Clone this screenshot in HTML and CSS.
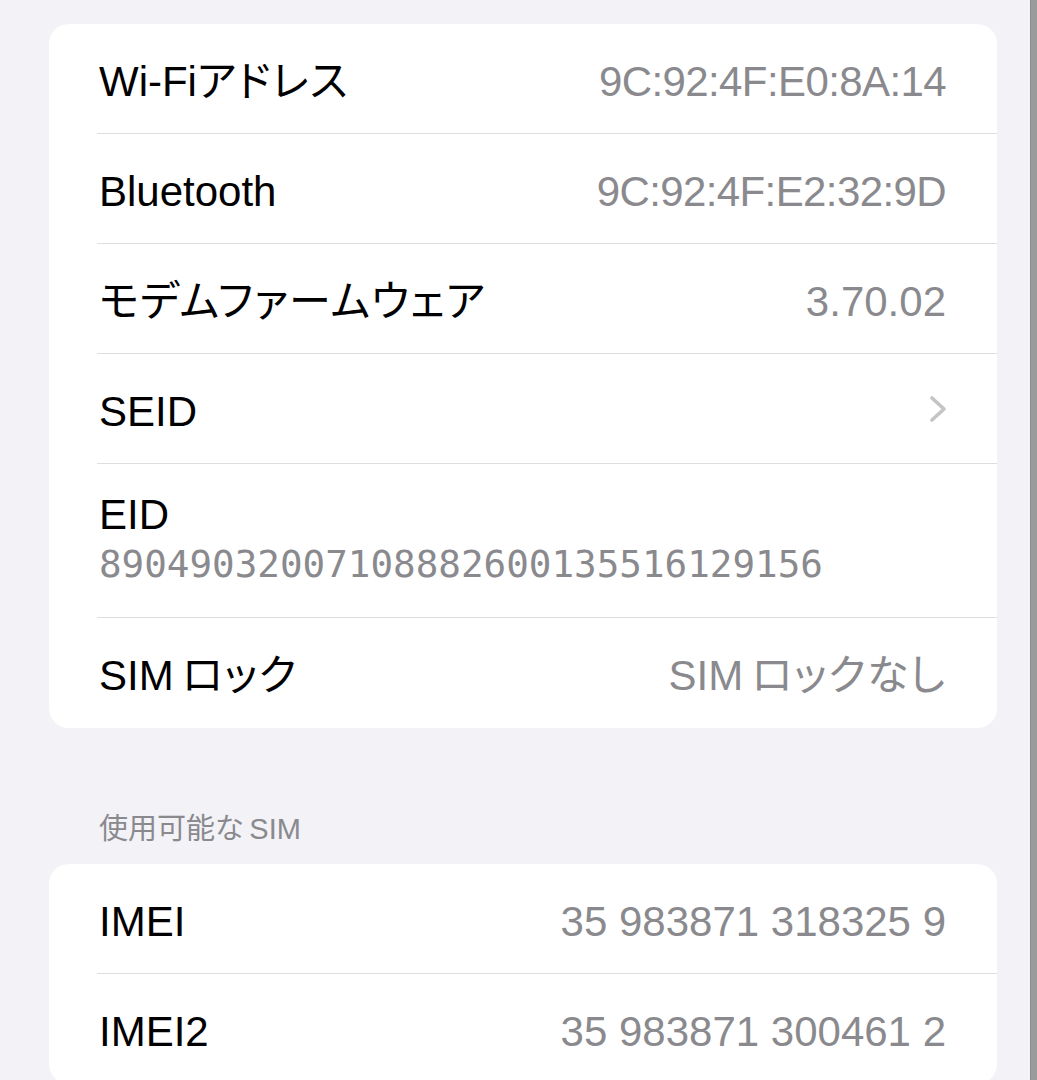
FILE: index.html
```html
<!DOCTYPE html>
<html lang="ja">
<head>
  <meta charset="UTF-8">
  <title>情報</title>
  <link rel="stylesheet" href="styles.css">
</head>
<body>
  <div class="screen">
    <div class="content">
      <div class="group">
        <div class="row">
          <div class="row-inner">
            <span class="label">Wi-Fi<span class="kana">アドレス</span></span>
            <span class="value mac">9C:92:4F:E0:8A:14</span>
          </div>
        </div>
        <div class="row">
          <div class="row-inner">
            <span class="label">Bluetooth</span>
            <span class="value mac">9C:92:4F:E2:32:9D</span>
          </div>
        </div>
        <div class="row">
          <div class="row-inner">
            <span class="label kana">モデムファームウェア</span>
            <span class="value">3.70.02</span>
          </div>
        </div>
        <div class="row">
          <div class="row-inner">
            <span class="label">SEID</span>
            <svg class="chevron" width="18" height="28" viewBox="0 0 18 28">
              <polyline points="3,3 15,14 3,25" fill="none" stroke="#c4c4c7" stroke-width="3.6" stroke-linecap="round" stroke-linejoin="round"/>
            </svg>
          </div>
        </div>
        <div class="row">
          <div class="row-inner stacked">
            <span class="label">EID</span>
            <span class="value mono">89049032007108882600135516129156</span>
          </div>
        </div>
        <div class="row">
          <div class="row-inner">
            <span class="label">SIM&thinsp;<span class="kana">ロック</span></span>
            <span class="value">SIM&thinsp;<span class="kana">ロックなし</span></span>
          </div>
        </div>
      </div>

      <div class="section-title">使用可能な&thinsp;SIM</div>

      <div class="group">
        <div class="row">
          <div class="row-inner">
            <span class="label">IMEI</span>
            <span class="value">35 983871 318325 9</span>
          </div>
        </div>
        <div class="row">
          <div class="row-inner">
            <span class="label">IMEI2</span>
            <span class="value">35 983871 300461 2</span>
          </div>
        </div>
      </div>
    </div>
    <div class="edge"></div>
  </div>
</body>
</html>
```

FILE: styles.css
```css
body {
  margin: 0;
  padding: 0;
  background-color: #f2f2f7;
  font-family: "Liberation Sans", "Noto Sans CJK JP", sans-serif;
}

.screen {
  display: flex;
  height: 1080px;
  overflow: hidden;
}

.content {
  flex: 1;
  padding: 24px 33px 0 49px;
}

.edge {
  width: 6px;
  background-color: #9b9b9b;
  border-left: 1px solid #8c8c8c;
}

.group {
  background-color: #fff;
  border-radius: 20px;
  overflow: hidden;
}

.row {
  padding-left: 48px;
}

.row-inner {
  box-sizing: border-box;
  height: 110px;
  padding: 6px 51px 0 0;
  display: flex;
  align-items: center;
  justify-content: space-between;
  border-bottom: 1px solid #dedee2;
}

.row:last-child .row-inner {
  border-bottom: none;
}

.row-inner.stacked {
  height: 154px;
  padding-top: 0;
  flex-direction: column;
  align-items: flex-start;
  justify-content: center;
}

.label {
  font-size: 42px;
  color: #000;
  padding-left: 2px;
  line-height: 52px;
  font-feature-settings: "palt";
}

.value {
  font-size: 42px;
  color: #8a8a8e;
  line-height: 52px;
  font-feature-settings: "palt";
}

.kana {
  letter-spacing: 1.2px;
}

.mac {
  letter-spacing: -0.6px;
}

.mono {
  font-family: "DejaVu Sans Mono", monospace;
  font-size: 37.6px;
  line-height: 46px;
  padding-left: 2px;
  margin-bottom: 6px;
}

.chevron {
  display: block;
  margin: -6px -1px 0 0;
}

.section-title {
  font-size: 29px;
  color: #8a8a8e;
  line-height: 40px;
  padding-left: 50px;
  margin: 81px 0 15px;
  font-feature-settings: "palt";
}
```
